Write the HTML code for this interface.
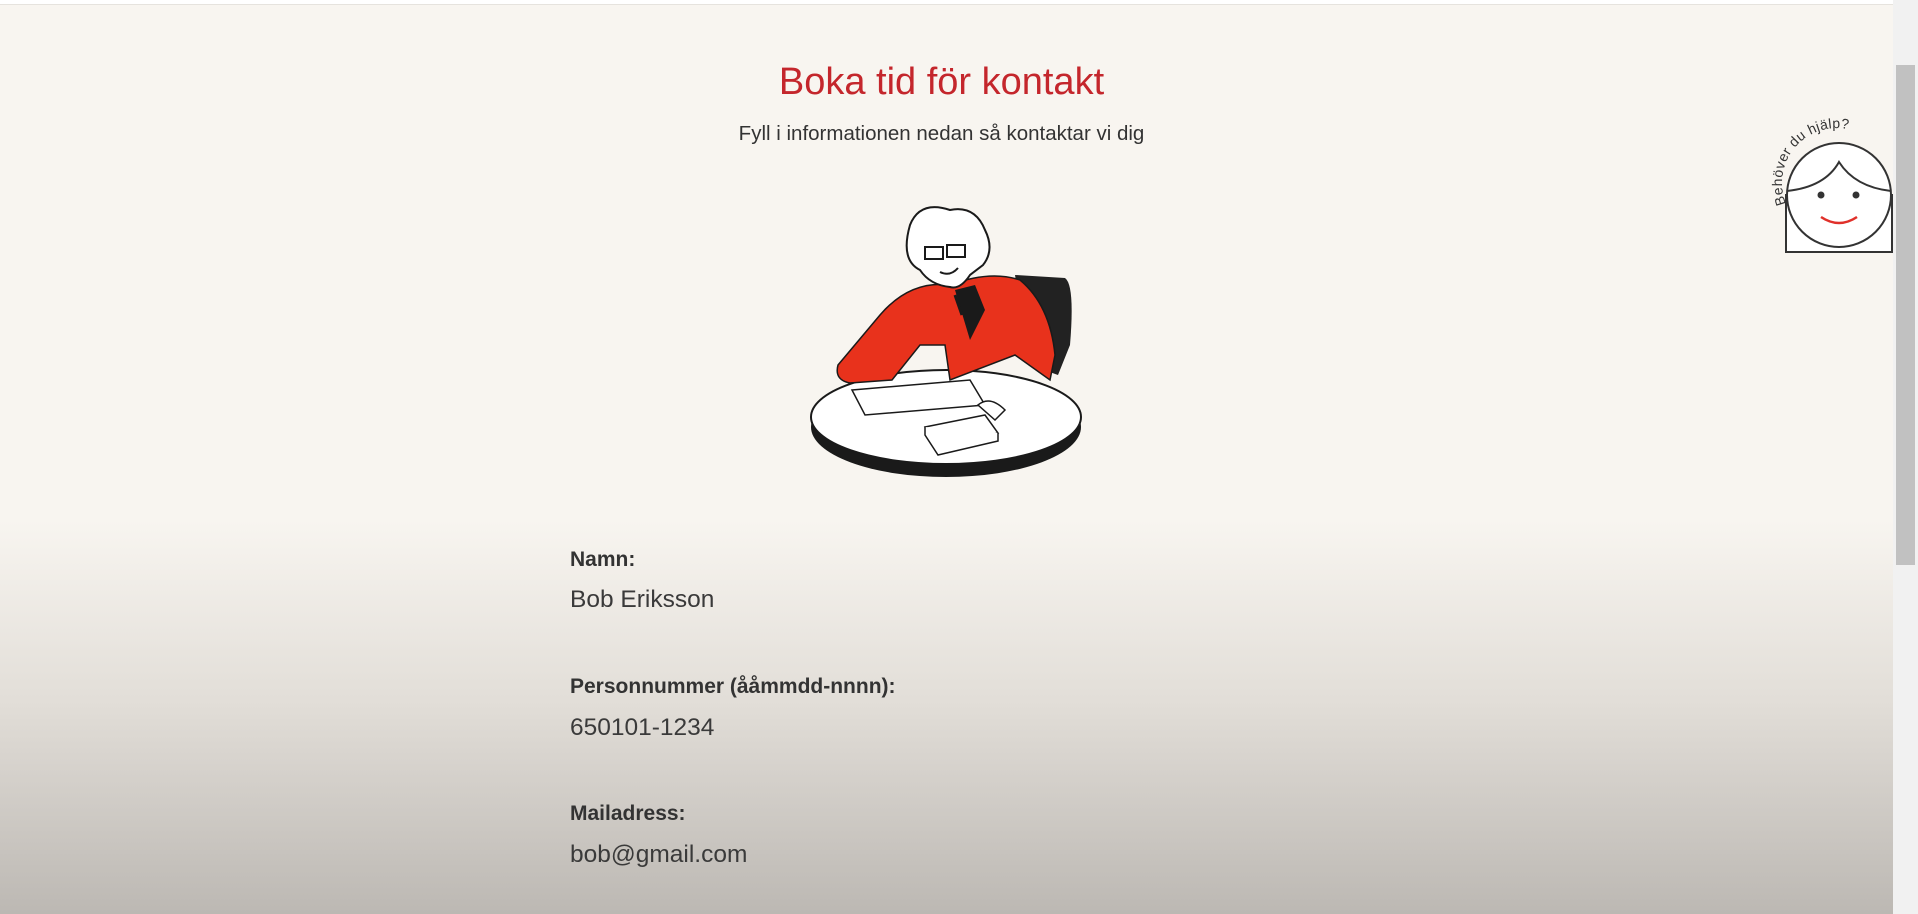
<!DOCTYPE html>
<html><head><meta charset="utf-8"><style>
html,body{margin:0;padding:0}
body{width:1918px;height:914px;overflow:hidden;position:relative;font-family:"Liberation Sans",sans-serif;
background:linear-gradient(to bottom,#f8f5f0 0px,#f8f5f0 520px,#e2ded8 700px,#bcb8b3 914px);}
.top{position:absolute;left:0;top:0;width:1893px;height:4px;background:#fff;border-bottom:1px solid #e6e3de}
h1{position:absolute;left:0;width:1883px;top:61px;margin:0;text-align:center;font-weight:normal;font-size:38px;color:#c4262c}
.sub{position:absolute;left:0;width:1883px;top:122px;text-align:center;font-size:20.5px;color:#333}
.lbl{position:absolute;left:570px;font-weight:bold;font-size:21px;color:#333}
.val{position:absolute;left:570px;font-size:24.5px;color:#3a3a3a}
.sb{position:absolute;right:0;top:0;width:25px;height:914px;background:#f1f1f1}
.th{position:absolute;right:3px;top:65px;width:19px;height:500px;background:#c1c1c1}
</style></head><body>
<div class="top"></div>
<h1>Boka tid för kontakt</h1>
<div class="sub">Fyll i informationen nedan så kontaktar vi dig</div>

<svg style="position:absolute;left:800px;top:205px" width="290" height="280" viewBox="0 0 290 280">
 <ellipse cx="146" cy="222" rx="135" ry="50" fill="#1a1a1a"/>
 <ellipse cx="146" cy="212" rx="135" ry="47" fill="#fff" stroke="#1a1a1a" stroke-width="2"/>
 <path d="M215 70 L265 73 Q275 80 270 140 L258 170 L230 160 Z" fill="#222"/>
 <path d="M150 80 Q110 75 80 110 L38 160 Q34 175 50 178 L92 175 L120 140 L145 140 L150 175 L215 150 L250 175 L255 150 Q250 100 220 75 Q190 65 150 80 Z" fill="#e8321c" stroke="#1a1a1a" stroke-width="1.5"/>
 <path d="M155 85 L175 80 L185 105 L170 135 Z" fill="#1a1a1a"/>
 <path d="M110 20 Q120 -5 150 5 Q175 0 185 25 Q195 45 183 60 L170 70 Q160 85 150 82 Q130 80 120 65 Q100 55 110 20 Z" fill="#fff" stroke="#1a1a1a" stroke-width="2"/>
 <rect x="125" y="42" width="18" height="12" fill="none" stroke="#1a1a1a" stroke-width="2"/>
 <rect x="147" y="40" width="18" height="12" fill="none" stroke="#1a1a1a" stroke-width="2"/>
 <path d="M140 67 Q150 72 158 63" fill="none" stroke="#1a1a1a" stroke-width="2"/>
 <path d="M52 185 L170 175 L185 200 L65 210 Z" fill="#fff" stroke="#1a1a1a" stroke-width="1.5"/>
 <path d="M125 222 L185 210 L198 228 L138 242 Z" fill="#fff" stroke="#1a1a1a" stroke-width="1.5"/>
 <path d="M125 222 L125 230 L138 250 L198 236 L198 228" fill="#fff" stroke="#1a1a1a" stroke-width="1.5"/>
 <path d="M155 90 L162 110" stroke="#1a1a1a" stroke-width="3"/>
 <path d="M178 200 Q190 190 205 205 L195 215 Z" fill="#fff" stroke="#1a1a1a" stroke-width="1.5"/>
</svg>

<div class="lbl" style="top:548px">Namn:</div>
<div class="val" style="top:586px">Bob Eriksson</div>
<div class="lbl" style="top:675px">Personnummer (ååmmdd-nnnn):</div>
<div class="val" style="top:714px">650101-1234</div>
<div class="lbl" style="top:802px">Mailadress:</div>
<div class="val" style="top:841px">bob@gmail.com</div>

<svg style="position:absolute;left:1750px;top:110px" width="145" height="150" viewBox="-20 -15 145 150">
 <defs><path id="arc" d="M19 78 A51 51 0 0 1 115 38"/></defs>
 <rect x="16" y="70" width="106" height="57" fill="#fff" stroke="#333" stroke-width="2"/>
 <circle cx="69" cy="70" r="52" fill="#fff" stroke="#333" stroke-width="2"/>
 <path d="M17 66 Q55 62 69 37 Q85 62 121 66" fill="none" stroke="#333" stroke-width="2"/>
 <circle cx="51" cy="70" r="3.5" fill="#333"/><circle cx="86" cy="70" r="3.5" fill="#333"/>
 <path d="M51 92 Q69 104 87 92" fill="none" stroke="#e0302a" stroke-width="2.5"/>
 <text font-family="Liberation Sans,sans-serif" font-size="14" fill="#333" dy="-3"><textPath href="#arc">Behöver du hjälp?</textPath></text>
</svg>

<div class="sb"><div class="th"></div></div>
</body></html>
